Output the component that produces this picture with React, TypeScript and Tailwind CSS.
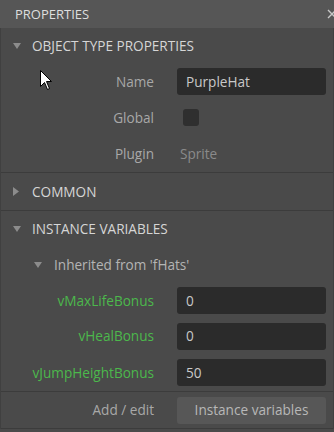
import React from 'react';

// Component - Triangle icons
function TriangleDown() {
    return (
        <svg width="8" height="6" viewBox="0 0 8 6">
            <path d="M0 0 L8 0 L4 6 Z" fill="#8c8c8c" />
        </svg>
    );
}

function TriangleRight() {
    return (
        <svg width="6" height="9" viewBox="0 0 6 9">
            <path d="M0 0 L6 4.5 L0 9 Z" fill="#8c8c8c" />
        </svg>
    );
}

// Component - Section header
function SectionHeader(props: { title: string; open: boolean; className: string }) {
    return (
        <div className={'flex items-center pl-[12px] text-[#d6d6d6] ' + props.className}>
            <div className="flex w-[19px] items-center">{props.open ? <TriangleDown /> : <TriangleRight />}</div>
            <span>{props.title}</span>
        </div>
    );
}

// Component - Property row
function Row(props: { label: string; green?: boolean; className: string; children: React.ReactNode }) {
    return (
        <div className={'flex items-center ' + props.className}>
            <div className={'w-[153px] shrink-0 text-right ' + (props.green ? 'text-[#4cb84c]' : 'text-[#a8a8a8]')}>{props.label}</div>
            <div className="ml-[23px] w-[149px]">{props.children}</div>
        </div>
    );
}

function Field(props: { value: string }) {
    return <div className="flex h-[27px] items-center rounded-[3px] bg-[#2b2b2b] pl-[9px] text-[#c9c9c9]">{props.value}</div>;
}

// Component - App
export default function App() {
    return (
        <div className="relative h-[432px] w-[334px] overflow-hidden bg-[#4a4a4a] font-['Open_Sans',sans-serif] text-[13.6px] leading-none">
            {/* Title bar */}
            <div className="flex h-[28px] items-center justify-between bg-[#565656] pl-[15px] text-[13px] text-[#dedede]">
                <span>PROPERTIES</span>
                <svg width="10" height="10" viewBox="0 0 10 10" className="mr-[-3px]">
                    <path d="M1 1 L9 9 M9 1 L1 9" stroke="#c8c8c8" strokeWidth="1.4" />
                </svg>
            </div>

            {/* Body */}
            <div className="border-l border-r border-[#404040]">
                <SectionHeader title="OBJECT TYPE PROPERTIES" open={true} className="h-[36px]" />
                <Row label="Name" className="h-[35px]">
                    <Field value="PurpleHat" />
                </Row>
                <Row label="Global" className="h-[37px]">
                    <div className="ml-[6px] h-[17px] w-[16px] rounded-[3px] bg-[#2f2f2f]" />
                </Row>
                <Row label="Plugin" className="h-[36px]">
                    <div className="pl-[3px] text-[#8a8a8a]">Sprite</div>
                </Row>
                <div className="h-[1px] bg-[#3c3c3c]" />

                <SectionHeader title="COMMON" open={false} className="h-[37px]" />
                <div className="h-[1px] bg-[#3c3c3c]" />

                <SectionHeader title="INSTANCE VARIABLES" open={true} className="h-[36px]" />
                <div className="flex h-[36px] items-center pl-[33px] text-[#b4b4b4]">
                    <div className="flex w-[20px] items-center">
                        <TriangleDown />
                    </div>
                    <span>Inherited from 'fHats'</span>
                </div>
                <Row label="vMaxLifeBonus" green={true} className="h-[35px]">
                    <Field value="0" />
                </Row>
                <Row label="vHealBonus" green={true} className="h-[36px]">
                    <Field value="0" />
                </Row>
                <Row label="vJumpHeightBonus" green={true} className="h-[37px]">
                    <Field value="50" />
                </Row>
                <div className="h-[1px] bg-[#3c3c3c]" />
                <Row label="Add / edit" className="h-[36px]">
                    <div className="flex h-[27px] items-center justify-center rounded-[3px] bg-[#575757] text-[#b8b8b8]">Instance variables</div>
                </Row>
                <div className="h-[1px] bg-[#3c3c3c]" />
            </div>

            {/* Mouse cursor */}
            <svg width="13" height="21" viewBox="0 0 13 21" className="absolute left-[40px] top-[70px]">
                <path d="M0.5 0.5 L0.5 16.5 L4.5 12.5 L7.5 19.5 L9.5 18.5 L6.5 11.5 L11.5 11.5 Z" fill="#ffffff" stroke="#000000" strokeWidth="1" />
            </svg>
        </div>
    );
}
